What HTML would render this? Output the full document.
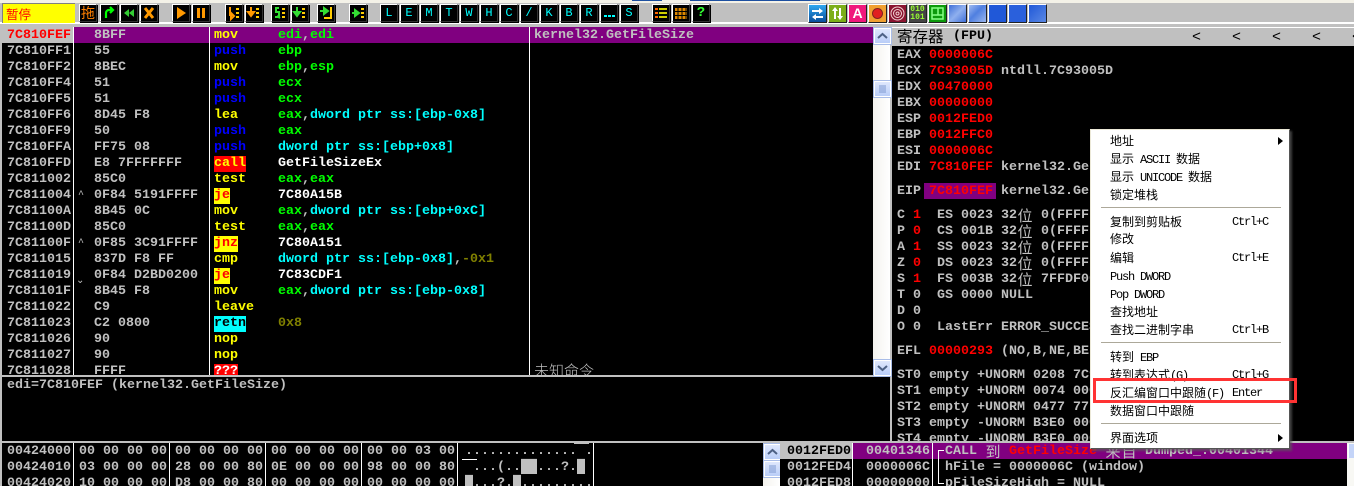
<!DOCTYPE html>
<html>
<head>
<meta charset="utf-8">
<style>
html,body{margin:0;padding:0;background:#c0c0c0;overflow:hidden;width:1354px;height:486px;}
body{position:relative;font-family:"Liberation Mono",monospace;}
div,pre,svg{position:absolute;margin:0;}
pre{font:bold 13.34px/16px "Liberation Mono","Noto Sans CJK SC",monospace;color:#c0c0c0;white-space:pre;padding-top:1px;}
.bl{background:#000;}
.w{background:#fff;}
.g{background:#c0c0c0;}
.b{top:4px;width:16px;height:16px;background:#000;border:1px solid;border-color:#fff #333 #333 #fff;box-shadow:1px 1px 0 #000;color:#0ff;font:12px/16px "Liberation Mono",monospace;text-align:center;overflow:hidden;}
.b svg{left:0;top:0;width:16px;height:16px;}
.c{top:4px;width:17px;height:17px;border:1px solid;border-color:#fff #222 #222 #fff;overflow:hidden;}
.c svg{left:0;top:0;width:17px;height:17px;}
.blue{background:linear-gradient(135deg,#4f7fe0,#2058d8 60%,#3a6ce0);}
.y{color:#ff0}.u{color:#00f}.n{color:#0f0}.a{color:#0ff}.h{color:#fff}.o{color:#808000}.r{color:#f00}
.hl{display:inline-block;height:16px;vertical-align:top;}
.z{display:inline-block;width:16px;font:normal 15px/16px "Noto Sans CJK SC",sans-serif;vertical-align:top;text-align:center;}
.sb{width:15px;height:14px;background:linear-gradient(#dfe8fd,#b9cdf8);border:1px solid #fff;box-shadow:0 0 0 1px #a9bde8;}
.m{left:19px;font:12px/18px "Noto Sans CJK SC",sans-serif;color:#000;white-space:pre;}
.m b{font:normal 12px/18px "Liberation Mono",monospace;letter-spacing:-1.2px;}
.s{left:141px;font:normal 12px/18px "Liberation Mono",monospace;letter-spacing:-1.2px;color:#000;}
.sep{left:10px;width:180px;height:1px;background:#aca899;border-bottom:1px solid #fff;}
.ar{left:187px;width:0;height:0;border-left:5px solid #000;border-top:4px solid transparent;border-bottom:4px solid transparent;}
.lt{top:29px;color:#000;font-size:15px;font-weight:normal;}
</style>
</head>
<body>
<!-- top strip -->
<div style="left:0;top:0;width:1354px;height:3px;background:#f4f2e8"></div>
<div style="left:632px;top:0;width:30px;height:1px;background:#1c4fa0"></div>
<div style="left:690px;top:0;width:130px;height:1px;background:#1c4fa0"></div>
<div style="left:0;top:3px;width:1354px;height:19px;background:#c0c0c0"></div>
<div class="w" style="left:0;top:22px;width:1354px;height:2px"></div>
<div class="g" style="left:0;top:24px;width:1354px;height:4px"></div>

<!-- status -->
<div style="left:2px;top:3px;width:73px;height:20px;background:#ff0;border-top:1px solid #808080;border-left:1px solid #808080;box-sizing:border-box;color:#f00;font:12.5px/19px 'Noto Sans CJK SC',sans-serif;padding-left:3px">暂停</div>

<!-- toolbar 1 -->
<div class="b" style="left:79px;color:#ff8000;font:14px/16px 'Noto Sans CJK SC',sans-serif">拖</div>
<div class="b" style="left:100px"><svg viewBox="0 0 16 16"><path d="M5 13V8a3 3 0 0 1 3-3h3M9 2l3 3-3 3" fill="none" stroke="#0f0" stroke-width="2.2"/></svg></div>
<div class="b" style="left:120px"><svg viewBox="0 0 16 16"><path d="M8 4L3 8l5 4zM13 4L8 8l5 4z" fill="#3c3"/></svg></div>
<div class="b" style="left:140px"><svg viewBox="0 0 16 16"><path d="M4 3l8 10M12 3L4 13" stroke="#f90" stroke-width="3"/></svg></div>
<div class="b" style="left:172px"><svg viewBox="0 0 16 16"><path d="M4 2l9 6-9 6z" fill="#f90"/></svg></div>
<div class="b" style="left:192px"><svg viewBox="0 0 16 16"><path d="M4 3h3v10H4zM9 3h3v10H9z" fill="#f90"/></svg></div>
<div class="b" style="left:225px"><svg viewBox="0 0 16 16"><path d="M4 2v8h3M5 8l3 3-3 3z" fill="none" stroke="#f90" stroke-width="2"/><path d="M10 3h3v2h-3zM10 7h3v2h-3zM10 11h3v2h-3z" fill="#fc0"/></svg></div>
<div class="b" style="left:245px"><svg viewBox="0 0 16 16"><path d="M5 2v6M2 7h6l-3 4z" stroke="#f90" stroke-width="2" fill="#f90"/><path d="M10 3h3v2h-3zM10 7h3v2h-3zM10 11h3v2h-3z" fill="#fc0"/></svg></div>
<div class="b" style="left:271px"><svg viewBox="0 0 16 16"><path d="M7 3H4v4h3v5H3M5 11l3 2" fill="none" stroke="#3d3" stroke-width="2"/><path d="M10 3h3v2h-3zM10 7h3v2h-3zM10 11h3v2h-3z" fill="#fc0"/></svg></div>
<div class="b" style="left:291px"><svg viewBox="0 0 16 16"><path d="M5 2v6M2 7h6l-3 4z" stroke="#3d3" stroke-width="2" fill="#3d3"/><path d="M10 3h3v2h-3zM10 7h3v2h-3zM10 11h3v2h-3z" fill="#fc0"/></svg></div>
<div class="b" style="left:317px"><svg viewBox="0 0 16 16"><path d="M2 6h5M6 3l4 3-4 3z" stroke="#3d3" stroke-width="2" fill="#3d3"/><path d="M13 2v11H6" fill="none" stroke="#fc0" stroke-width="2"/></svg></div>
<div class="b" style="left:349px"><svg viewBox="0 0 16 16"><path d="M2 8h4M5 5l4 3-4 3z" stroke="#3d3" stroke-width="2" fill="#3d3"/><path d="M11 3h3v2h-3zM11 7h3v2h-3zM11 11h3v2h-3z" fill="#fc0"/></svg></div>
<div class="b" style="left:380px">L</div>
<div class="b" style="left:400px">E</div>
<div class="b" style="left:420px">M</div>
<div class="b" style="left:440px">T</div>
<div class="b" style="left:460px">W</div>
<div class="b" style="left:480px">H</div>
<div class="b" style="left:500px">C</div>
<div class="b" style="left:520px">/</div>
<div class="b" style="left:540px">K</div>
<div class="b" style="left:560px">B</div>
<div class="b" style="left:580px">R</div>
<div class="b" style="left:600px"><svg viewBox="0 0 16 16"><path d="M3 10h3v2H3zM7 10h3v2H7zM11 10h3v2h-3z" fill="#0ff"/></svg></div>
<div class="b" style="left:620px">S</div>
<div class="b" style="left:652px"><svg viewBox="0 0 16 16"><path d="M2 3h3v2H2zM2 7h3v2H2zM2 11h3v2H2z" fill="#f60"/><path d="M6 3h8v2H6zM6 7h8v2H6zM6 11h8v2H6z" fill="#cc0"/></svg></div>
<div class="b" style="left:672px"><svg viewBox="0 0 16 16"><path d="M2 3h12v3H2zM2 7h12v3H2zM2 11h12v3H2z" fill="#d80"/><path d="M5 3v11M9 3v11M13 3v11" stroke="#000"/></svg></div>
<div class="b" style="left:692px;color:#3f3;font:bold 14px/16px 'Liberation Mono',monospace">?</div>

<!-- toolbar 2 -->
<div class="c" style="left:808px;background:linear-gradient(#2fa8f0,#0a4f9c)"><svg viewBox="0 0 17 17"><path d="M3 5h7V3l4 3-4 3V7H3zM14 11H7V9l-4 3 4 3v-2h7z" fill="#fff"/></svg></div>
<div class="c" style="left:828px;background:#7cae18"><svg viewBox="0 0 17 17"><path d="M5 14V6H3l3-4 3 4H7v8zM12 3v8h2l-3 4-3-4h2V3z" fill="#fff"/></svg></div>
<div class="c" style="left:848px;background:#f0187c;color:#fff;font:bold 14px/17px 'Liberation Sans',sans-serif;text-align:center">A</div>
<div class="c" style="left:868px;background:#f0a030"><svg viewBox="0 0 17 17"><circle cx="8.5" cy="8.5" r="5" fill="#e02020" stroke="#802020"/></svg></div>
<div class="c" style="left:888px;background:#8a1430"><svg viewBox="0 0 17 17"><g fill="none" stroke="#f0d0d0"><circle cx="8.5" cy="8.5" r="6.5"/><circle cx="8.5" cy="8.5" r="4"/><circle cx="8.5" cy="8.5" r="1.5"/></g></svg></div>
<div class="c" style="left:908px;background:#444;color:#9f3;font:bold 8px/8px 'Liberation Mono',monospace;text-align:center;padding-top:0"><span style="position:absolute;left:0;top:1px;width:17px">010</span><span style="position:absolute;left:0;top:9px;width:17px">101</span></div>
<div class="c" style="left:928px;background:#0c9a0c"><svg viewBox="0 0 17 17"><path d="M3 3h11v11H3zM3 10h11M9 10V3" fill="none" stroke="#8f8" stroke-width="1.5"/></svg></div>
<div class="c blue" style="left:948px;background:linear-gradient(135deg,#3f6fd8,#8fb0ee 50%,#3f6fd8)"></div>
<div class="c blue" style="left:968px;background:linear-gradient(135deg,#a0bcf0,#4f7fe0 45%,#9ab6ee)"></div>
<div class="c blue" style="left:988px;background:#2058d8"></div>
<div class="c blue" style="left:1008px;background:#2a60dc"></div>
<div class="c blue" style="left:1028px;background:linear-gradient(135deg,#2058d8,#5a88e4)"></div>

<!-- disasm pane -->
<div class="bl" style="left:2px;top:27px;width:871px;height:348px"></div>
<div class="g" style="left:2px;top:27px;width:71px;height:16px"></div>
<div style="left:73px;top:27px;width:800px;height:16px;background:#800080"></div>
<div class="w" style="left:73px;top:27px;width:1px;height:348px"></div>
<div class="w" style="left:209px;top:27px;width:1px;height:348px"></div>
<div class="w" style="left:529px;top:27px;width:1px;height:348px"></div>
<div style="left:0;top:27px;width:873px;height:348px;overflow:hidden">
<pre style="left:7px;top:0"><span class="r">7C810FEF</span>
7C810FF1
7C810FF2
7C810FF4
7C810FF5
7C810FF6
7C810FF9
7C810FFA
7C810FFD
7C811002
7C811004
7C81100A
7C81100D
7C81100F
7C811015
7C811019
7C81101F
7C811022
7C811023
7C811026
7C811027
7C811028</pre>
<pre style="left:94px;top:0">8BFF
55
8BEC
51
51
8D45 F8
50
FF75 08
E8 7FFFFFFF
85C0
0F84 5191FFFF
8B45 0C
85C0
0F85 3C91FFFF
837D F8 FF
0F84 D2BD0200
8B45 F8
C9
C2 0800
90
90
FFFF</pre>
<pre style="left:78px;top:160px;font-weight:normal;font-size:10px">^</pre>
<pre style="left:78px;top:208px;font-weight:normal;font-size:10px">^</pre>
<pre style="left:70px;top:246px;font-weight:normal;font-size:10px"> &#8964;</pre>
<pre style="left:214px;top:0"><span class="y">mov</span>
<span class="u">push</span>
<span class="y">mov</span>
<span class="u">push</span>
<span class="u">push</span>
<span class="y">lea</span>
<span class="u">push</span>
<span class="u">push</span>
<span class="hl y" style="background:#f00">call</span>
<span class="y">test</span>
<span class="hl r" style="background:#ff0">je</span>
<span class="y">mov</span>
<span class="y">test</span>
<span class="hl r" style="background:#ff0">jnz</span>
<span class="y">cmp</span>
<span class="hl r" style="background:#ff0">je</span>
<span class="y">mov</span>
<span class="y">leave</span>
<span class="hl" style="background:#0ff;color:#000">retn</span>
<span class="y">nop</span>
<span class="y">nop</span>
<span class="hl h" style="background:#f00">???</span></pre>
<pre style="left:278px;top:0"><span class="n">edi</span><span>,</span><span class="n">edi</span>
<span class="n">ebp</span>
<span class="n">ebp</span><span>,</span><span class="n">esp</span>
<span class="n">ecx</span>
<span class="n">ecx</span>
<span class="n">eax</span><span>,</span><span class="a">dword ptr ss:[ebp-0x8]</span>
<span class="n">eax</span>
<span class="a">dword ptr ss:[ebp+0x8]</span>
<span class="h">GetFileSizeEx</span>
<span class="n">eax</span><span>,</span><span class="n">eax</span>
<span class="h">7C80A15B</span>
<span class="n">eax</span><span>,</span><span class="a">dword ptr ss:[ebp+0xC]</span>
<span class="n">eax</span><span>,</span><span class="n">eax</span>
<span class="h">7C80A151</span>
<span class="a">dword ptr ss:[ebp-0x8]</span><span>,</span><span class="o">-0x1</span>
<span class="h">7C83CDF1</span>
<span class="n">eax</span><span>,</span><span class="a">dword ptr ss:[ebp-0x8]</span>

<span class="o">0x8</span></pre>
<pre style="left:534px;top:0">kernel32.GetFileSize</pre>
<div style="left:534px;top:333px;color:#c0c0c0;font:15px/22px 'Noto Sans CJK SC',sans-serif;font-weight:300">未知命令</div>
</div>

<!-- disasm scrollbar -->
<div style="left:873px;top:27px;width:17px;height:348px;background:linear-gradient(90deg,#f4f3ee,#fff)"></div>
<div class="sb" style="left:874px;top:28px"><svg style="left:0;top:0" width="15" height="14" viewBox="0 0 15 14"><path d="M3 9l4.5-4L12 9" fill="none" stroke="#4d6185" stroke-width="2"/></svg></div>
<div class="sb" style="left:874px;top:81px"><svg style="left:0;top:0" width="15" height="14" viewBox="0 0 15 14"><path d="M4 4h7M4 6h7M4 8h7M4 10h7" stroke="#7f9ad0"/></svg></div>
<div class="sb" style="left:874px;top:360px"><svg style="left:0;top:0" width="15" height="14" viewBox="0 0 15 14"><path d="M3 5l4.5 4L12 5" fill="none" stroke="#4d6185" stroke-width="2"/></svg></div>

<!-- info pane -->
<div class="bl" style="left:2px;top:377px;width:888px;height:64px"></div>
<pre style="left:7px;top:377px">edi=7C810FEF (kernel32.GetFileSize)</pre>

<!-- register pane -->
<div class="g" style="left:892px;top:27px;width:462px;height:19px;border-top:1px solid #fff;box-sizing:border-box"></div>
<div style="left:897px;top:26px;color:#000;font:15.5px/20px 'Noto Sans CJK SC',sans-serif">寄存器</div>
<pre style="left:953px;top:28px;color:#000">(FPU)</pre>
<pre class="lt" style="left:1192px">&lt;</pre>
<pre class="lt" style="left:1232px">&lt;</pre>
<pre class="lt" style="left:1272px">&lt;</pre>
<pre class="lt" style="left:1312px">&lt;</pre>
<pre class="lt" style="left:1352px">&lt;</pre>
<div class="bl" style="left:892px;top:46px;width:462px;height:395px"></div>
<pre style="left:897px;top:47px">EAX <span class="r">0000006C</span>
ECX <span class="r">7C93005D</span> ntdll.7C93005D
EDX <span class="r">00470000</span>
EBX <span class="r">00000000</span>
ESP <span class="r">0012FED0</span>
EBP <span class="r">0012FFC0</span>
ESI <span class="r">0000006C</span>
EDI <span class="r">7C810FEF</span> kernel32.GetFileSize</pre>
<div style="left:924px;top:183px;width:72px;height:16px;background:#800080"></div>
<pre style="left:897px;top:183px">EIP <span class="r">7C810FEF</span> kernel32.GetFileSize</pre>
<pre style="left:897px;top:207px">C <span class="r">1</span>  ES 0023 32<span class="z">位</span> 0(FFFFFFFF)
P <span class="r">0</span>  CS 001B 32<span class="z">位</span> 0(FFFFFFFF)
A <span class="r">1</span>  SS 0023 32<span class="z">位</span> 0(FFFFFFFF)
Z <span class="r">0</span>  DS 0023 32<span class="z">位</span> 0(FFFFFFFF)
S <span class="r">1</span>  FS 003B 32<span class="z">位</span> 7FFDF000(FFF)
T 0  GS 0000 NULL
D 0
O 0  LastErr ERROR_SUCCESS</pre>
<pre style="left:897px;top:343px">EFL <span class="r">00000293</span> (NO,B,NE,BE,S,PO,L,LE)</pre>
<div style="left:892px;top:367px;width:462px;height:74px;overflow:hidden">
<pre style="left:5px;top:0">ST0 empty +UNORM 0208 7C930000
ST1 empty +UNORM 0074 00000000
ST2 empty +UNORM 0477 77F00000
ST3 empty -UNORM B3E0 00000000
ST4 empty -UNORM B3F0 00000000</pre>
</div>

<!-- dump pane -->
<div class="bl" style="left:2px;top:443px;width:761px;height:43px"></div>
<div class="w" style="left:73px;top:443px;width:1px;height:43px"></div>
<div class="w" style="left:169px;top:443px;width:1px;height:43px"></div>
<div class="w" style="left:265px;top:443px;width:1px;height:43px"></div>
<div class="w" style="left:361px;top:443px;width:1px;height:43px"></div>
<div class="w" style="left:457px;top:443px;width:1px;height:43px"></div>
<div class="w" style="left:593px;top:443px;width:1px;height:43px"></div>
<pre style="left:7px;top:443px">00424000
00424010
00424020</pre>
<pre style="left:79px;top:443px">00 00 00 00
03 00 00 00
10 00 00 00</pre>
<pre style="left:175px;top:443px">00 00 00 00
28 00 00 80
D8 00 00 80</pre>
<pre style="left:271px;top:443px">00 00 00 00
0E 00 00 00
00 00 00 00</pre>
<pre style="left:367px;top:443px">00 00 03 00
98 00 00 80
00 00 00 00</pre>
<pre style="left:465px;top:443px">.............. .
 ...(..██...?.█
█...?.█.........</pre>
<div class="w" style="left:462px;top:459px;width:15px;height:1px"></div>
<div class="g" style="left:574px;top:443px;width:15px;height:1px"></div>

<!-- dump scrollbar -->
<div style="left:763px;top:443px;width:17px;height:43px;background:linear-gradient(90deg,#f4f3ee,#fff)"></div>
<div class="sb" style="left:764px;top:444px"><svg style="left:0;top:0" width="15" height="14" viewBox="0 0 15 14"><path d="M3 9l4.5-4L12 9" fill="none" stroke="#4d6185" stroke-width="2"/></svg></div>
<div class="sb" style="left:764px;top:461px"><svg style="left:0;top:0" width="15" height="14" viewBox="0 0 15 14"><path d="M4 4h7M4 6h7M4 8h7M4 10h7" stroke="#7f9ad0"/></svg></div>

<!-- stack pane -->
<div class="bl" style="left:780px;top:443px;width:574px;height:43px"></div>
<div class="g" style="left:780px;top:443px;width:72px;height:16px"></div>
<div style="left:853px;top:443px;width:494px;height:16px;background:#800080"></div>
<div class="w" style="left:852px;top:443px;width:1px;height:43px"></div>
<div class="w" style="left:932px;top:443px;width:1px;height:43px"></div>
<pre style="left:787px;top:443px"><span style="color:#000">0012FED0</span>
0012FED4
0012FED8</pre>
<pre style="left:866px;top:443px">00401346
0000006C
00000000</pre>
<pre style="left:945px;top:443px">CALL <span class="z">到</span> <span class="r">GetFileSize</span> <span class="z">来</span><span class="z">自</span> Dumped_.00401344
hFile = 0000006C (window)
pFileSizeHigh = NULL</pre>
<div class="w" style="left:938px;top:450px;width:1px;height:34px"></div>
<div class="w" style="left:938px;top:450px;width:6px;height:1px"></div>
<div class="w" style="left:938px;top:483px;width:6px;height:1px"></div>
<div style="left:1347px;top:443px;width:7px;height:43px;background:#f8f8f4"></div>
<div style="left:1348px;top:444px;width:6px;height:14px;background:#c4d4f8;border-left:1px solid #fff;box-sizing:border-box"></div>

<!-- context menu -->
<div style="left:1090px;top:129px;width:200px;height:320px;background:#fff;border:1px solid;border-color:#ece9d8 #555 #555 #ece9d8;box-sizing:border-box;box-shadow:2px 2px 2px rgba(90,90,90,.7)">
<div class="m" style="top:2px">地址</div><div class="ar" style="top:7px"></div>
<div class="m" style="top:20px">显示<b> ASCII </b>数据</div>
<div class="m" style="top:38px">显示<b> UNICODE </b>数据</div>
<div class="m" style="top:56px">锁定堆栈</div>
<div class="sep" style="top:77px"></div>
<div class="m" style="top:83px">复制到剪贴板</div><div class="s" style="top:83px">Ctrl+C</div>
<div class="m" style="top:100px">修改</div>
<div class="m" style="top:119px">编辑</div><div class="s" style="top:119px">Ctrl+E</div>
<div class="m" style="top:137px"><b>Push DWORD</b></div>
<div class="m" style="top:155px"><b>Pop DWORD</b></div>
<div class="m" style="top:173px">查找地址</div>
<div class="m" style="top:191px">查找二进制字串</div><div class="s" style="top:191px">Ctrl+B</div>
<div class="sep" style="top:212px"></div>
<div class="m" style="top:218px">转到<b> EBP</b></div>
<div class="m" style="top:236px">转到表达式<b>(G)</b></div><div class="s" style="top:236px">Ctrl+G</div>
<div class="m" style="top:254px">反汇编窗口中跟随<b>(F)</b></div><div class="s" style="top:254px">Enter</div>
<div class="m" style="top:272px">数据窗口中跟随</div>
<div class="sep" style="top:293px"></div>
<div class="m" style="top:299px">界面选项</div><div class="ar" style="top:304px"></div>
</div>
<!-- red highlight -->
<div style="left:1093px;top:378px;width:204px;height:25px;border:3px solid #f33;box-sizing:border-box"></div>
</body>
</html>
